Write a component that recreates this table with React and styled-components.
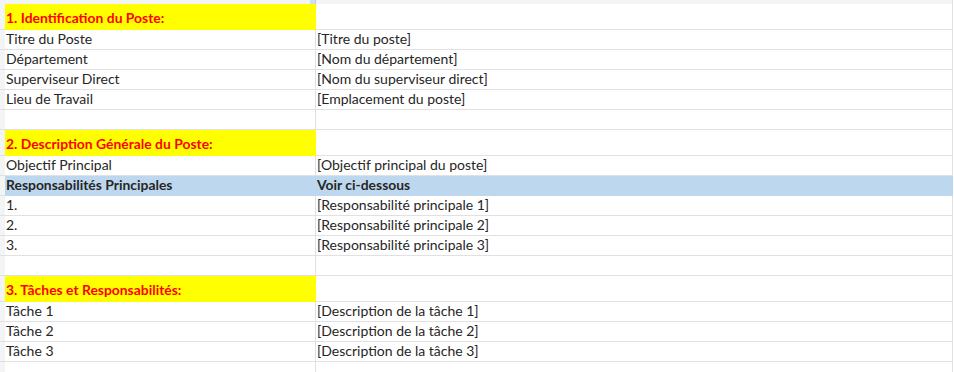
import React from "react";
import styled, { createGlobalStyle, css } from "styled-components";

const Global = createGlobalStyle`
  html, body { margin: 0; padding: 0; background: #ffffff; }
  body { font-family: Lato, "Open Sans", sans-serif; }
`;

const GRID = "#e1e1e1";

const Sheet = styled.div`
  width: 954px;
  height: 372px;
  overflow: hidden;
  background: #ffffff;
`;

const Row = styled.div`
  display: grid;
  grid-template-columns: 5px 311px 637px;
  height: ${(p) => p.$h}px;
`;

const RowHead = styled.div`
  background: #f3f4f6;
  border-bottom: 1px solid ${GRID};
`;

const TopHead = styled.div`
  background: #f3f4f6;
  border-right: 1px solid ${(p) => (p.$sel ? "#b9c9e6" : GRID)};
  ${(p) =>
    p.$sel &&
    css`
      background: linear-gradient(to right, #f3f4f6 0, #f3f4f6 305px, #cfdcf2 305px);
    `}
`;

const Cell = styled.div`
  box-sizing: border-box;
  border-right: 1px solid ${(p) => p.$fill || GRID};
  border-bottom: 1px solid ${(p) => p.$fill || GRID};
  background: ${(p) => p.$fill || "#ffffff"};
  display: flex;
  align-items: flex-end;
  padding: 0 0 ${(p) => (p.$red ? 3 : 2)}px 1px;
  font-size: ${(p) => (p.$bold ? "13.9px" : "14px")};
  line-height: 17px;
  color: ${(p) => (p.$red ? "#ff0000" : "#262626")};
  font-weight: ${(p) => (p.$bold ? 700 : 400)};
  white-space: nowrap;
  overflow: hidden;
`;

const Corner = styled.div`
  background: #f3f4f6;
`;

const data = [
  { type: "head", a: "1. Identification du Poste:" },
  { a: "Titre du Poste", b: "[Titre du poste]" },
  { a: "Département", b: "[Nom du département]" },
  { a: "Superviseur Direct", b: "[Nom du superviseur direct]" },
  { a: "Lieu de Travail", b: "[Emplacement du poste]" },
  { a: "", b: "" },
  { type: "head", a: "2. Description Générale du Poste:" },
  { a: "Objectif Principal", b: "[Objectif principal du poste]" },
  { type: "blue", a: "Responsabilités Principales", b: "Voir ci-dessous" },
  { a: "1.", b: "[Responsabilité principale 1]" },
  { a: "2.", b: "[Responsabilité principale 2]" },
  { a: "3.", b: "[Responsabilité principale 3]" },
  { a: "", b: "" },
  { type: "head", a: "3. Tâches et Responsabilités:" },
  { a: "Tâche 1", b: "[Description de la tâche 1]" },
  { a: "Tâche 2", b: "[Description de la tâche 2]" },
  { a: "Tâche 3", b: "[Description de la tâche 3]" },
  { a: "", b: "" },
];

export default function App() {
  return (
    <>
      <Global />
      <Sheet>
        <Row $h={4}>
          <Corner />
          <TopHead $sel />
          <TopHead />
        </Row>
        {data.map((r, i) => {
          if (r.type === "head") {
            return (
              <Row key={i} $h={26}>
                <RowHead />
                <Cell $fill="#ffff00" $red $bold>
                  {r.a}
                </Cell>
                <Cell />
              </Row>
            );
          }
          if (r.type === "blue") {
            return (
              <Row key={i} $h={20}>
                <RowHead />
                <Cell $fill="#bdd7ee" $bold>
                  {r.a}
                </Cell>
                <Cell $fill="#bdd7ee" $bold>
                  {r.b}
                </Cell>
              </Row>
            );
          }
          return (
            <Row key={i} $h={20}>
              <RowHead />
              <Cell>{r.a}</Cell>
              <Cell>{r.b}</Cell>
            </Row>
          );
        })}
      </Sheet>
    </>
  );
}
